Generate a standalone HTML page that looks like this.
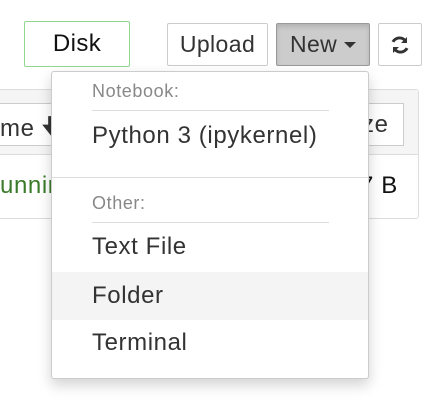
<!DOCTYPE html>
<html><head><style>
body{margin:0;width:436px;height:418px;background:#fff;font-family:"Liberation Sans",Arial,sans-serif;position:relative;overflow:hidden;color:#333}
.a{position:absolute;box-sizing:border-box}
.btn{border:1px solid #ccc;background:#fff;display:flex;align-items:center;justify-content:center;font-size:23px;letter-spacing:0.4px;color:#333;border-radius:2px}
.t{position:absolute;white-space:nowrap}
.m{font-size:24px;letter-spacing:0.6px}
.g{font-size:18px;letter-spacing:0.6px;color:#888}
</style></head><body>
<div class="a btn" style="left:24px;top:21px;width:106px;height:46px;border:1.5px solid #8fd88f;font-size:24px;color:#111">Disk</div>
<div class="a btn" style="left:167px;top:23px;width:101px;height:43px">Upload</div>
<div class="a btn" style="left:276px;top:23px;width:94px;height:43px;background:#ccc;border-color:#999;box-shadow:inset 0 3px 5px rgba(0,0,0,.125)">New&nbsp;<svg width="12" height="8" viewBox="0 0 12 8"><path d="M0 1h12L6 7z" fill="#333"/></svg></div>
<div class="a btn" style="left:378px;top:23px;width:44px;height:43px"><svg width="22" height="22" viewBox="0 0 22 22"><path d="M18 3v6h-6l2.3-2.3A6 6 0 0 0 5.3 8.5L2.6 7.3A9 9 0 0 1 16.4 4.6z M4 19v-6h6l-2.3 2.3a6 6 0 0 0 9-1.8l2.7 1.2A9 9 0 0 1 5.6 17.4z" fill="#333"/></svg></div>
<div class="a" style="left:-5px;top:89px;width:424px;height:130px;border:1px solid #ddd;border-radius:3px;background:#fff"></div>
<div class="a" style="left:-4px;top:90px;width:422px;height:65px;background:#f5f5f5;border-bottom:1px solid #ddd"></div>
<div class="a" style="left:-5px;top:103px;width:60px;height:43px;border:1px solid #ccc;background:#fff"></div>
<div class="t m" style="left:0;top:111px">me <b>&#x1F847;</b></div>
<div class="a" style="left:355px;top:103px;width:49px;height:43px;border:1px solid #ccc;background:#fff"></div>
<div class="t m" style="left:362px;top:111px">ze</div>
<div class="t m" style="left:0;top:172px;color:#3a7a2a">unnin</div>
<div class="t m" style="left:360px;top:172px;color:#111">7 B</div>
<div class="a" style="left:51px;top:71px;width:318px;height:308px;background:#fff;border:1px solid rgba(0,0,0,.2);border-radius:3px;box-shadow:0 6px 14px rgba(0,0,0,.18)">
<div class="t g" style="left:40px;top:9px">Notebook:</div>
<div class="a" style="left:40px;top:38px;width:237px;height:1px;background:#ddd"></div>
<div class="t m" style="left:40px;top:50px">Python 3 (ipykernel)</div>
<div class="a" style="left:0;top:105px;width:316px;height:1px;background:#ddd"></div>
<div class="t g" style="left:40px;top:121px">Other:</div>
<div class="a" style="left:40px;top:150px;width:237px;height:1px;background:#ddd"></div>
<div class="t m" style="left:40px;top:161px">Text File</div>
<div class="a" style="left:0;top:200px;width:316px;height:48px;background:#f4f4f4"></div>
<div class="t m" style="left:40px;top:210px">Folder</div>
<div class="t m" style="left:40px;top:257px">Terminal</div>
</div>
</body></html>
